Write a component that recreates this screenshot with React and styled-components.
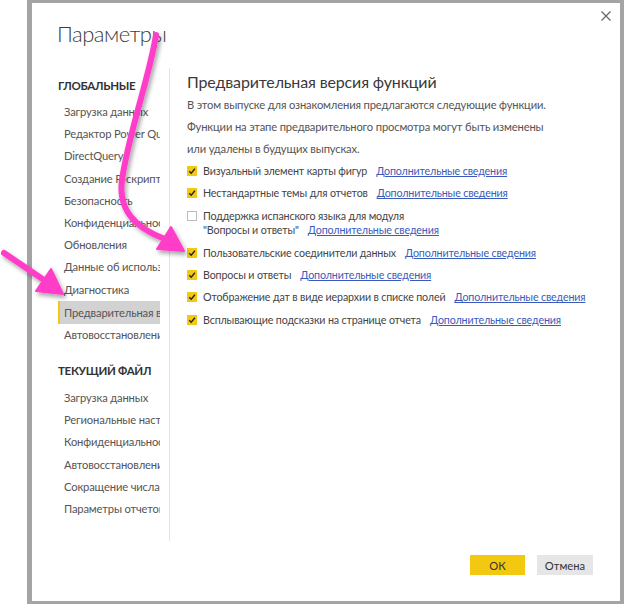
import React from "react";
import styled, { createGlobalStyle } from "styled-components";

const GlobalStyle = createGlobalStyle`
  html, body {
    margin: 0;
    background: #fff;
    font-family: Lato, "Open Sans", sans-serif;
  }
`;

const Page = styled.div`
  position: relative;
  width: 624px;
  height: 605px;
  padding-left: 27px;
  box-sizing: border-box;
  overflow: hidden;
`;

const Frame = styled.div`
  width: 597px;
  height: 604px;
  box-sizing: border-box;
  border: 4px solid #a4a4a4;
  border-top-width: 3px;
  border-bottom-width: 3px;
  border-left-width: 5px;
  background: #fff;
  display: flex;
  flex-direction: column;
  padding: 8px 9px 0 26px;
`;

const Header = styled.div`
  height: 57px;
  display: flex;
  justify-content: space-between;
  align-items: flex-start;
`;

const DialogTitle = styled.h1`
  margin: 8px 0 0 -1px;
  font-size: 22px;
  line-height: 30px;
  font-weight: 300;
  letter-spacing: -0.5px;
  color: #3c3c3c;
`;

const CloseButton = styled.button`
  width: 10px;
  height: 10px;
  padding: 0;
  border: none;
  background: none;
  display: flex;
`;

const Main = styled.div`
  height: 473px;
  display: flex;
`;

const Nav = styled.nav`
  width: 102px;
  padding-top: 8px;
  margin-right: 9px;
  overflow: hidden;
  white-space: nowrap;
`;

const Divider = styled.div`
  width: 1px;
  background: #e4e4e4;
`;

const SectionTitle = styled.div`
  font-size: 11.5px;
  line-height: 20px;
  font-weight: 700;
  letter-spacing: -0.3px;
  color: #333;
  margin-top: ${(p) => p.$top || 0}px;
  margin-bottom: ${(p) => p.$bottom || 0}px;
`;

const NavItem = styled.div`
  font-size: 11.2px;
  letter-spacing: -0.15px;
  line-height: ${(p) => (p.$active ? "23px" : "22.2px")};
  color: #555;
  padding-left: ${(p) => (p.$active ? "4px" : "6px")};
  background: ${(p) => (p.$active ? "#d2d2d2" : "transparent")};
  border-left: ${(p) => (p.$active ? "2px solid #f2c811" : "none")};
  overflow: hidden;
`;

const Content = styled.section`
  flex: 1;
  padding: 2px 0 0 17px;
`;

const ContentTitle = styled.h2`
  margin: 0;
  font-size: 16px;
  line-height: 24px;
  font-weight: 400;
  letter-spacing: -0.15px;
  color: #3a3a3a;
`;

const Paragraph = styled.p`
  margin: 0;
  font-size: 11.2px;
  letter-spacing: -0.15px;
  line-height: 22px;
  color: #555;
`;

const Row = styled.div`
  display: flex;
  align-items: flex-start;
  padding: 4px 0;
  font-size: 10.7px;
  letter-spacing: -0.15px;
  line-height: 14.4px;
  color: #444;
`;

const Box = styled.span`
  flex: none;
  width: 10px;
  height: 10px;
  margin-top: 2px;
  box-sizing: border-box;
  display: flex;
  align-items: center;
  justify-content: center;
  background: ${(p) => (p.$checked ? "#f2c811" : "#fff")};
  border: ${(p) => (p.$checked ? "none" : "1px solid #bdbdbd")};
`;

const Label = styled.span`
  margin-left: 6px;
`;

const MoreLink = styled.a`
  margin-left: 9px;
  color: #3a5bbb;
  text-decoration: underline;
  cursor: pointer;
`;

const Footer = styled.div`
  display: flex;
  justify-content: flex-end;
  gap: 12px;
  margin-top: 14px;
  padding-right: 18px;
`;

const Button = styled.button`
  width: ${(p) => (p.$primary ? "55px" : "56px")};
  height: 20px;
  border: none;
  padding: 0;
  font-family: inherit;
  font-size: 11.2px;
  color: #333;
  background: ${(p) => (p.$primary ? "#f2c811" : "#e6e6e6")};
`;

const Overlay = styled.svg`
  position: absolute;
  left: 0;
  top: 0;
  pointer-events: none;
`;

const globalItems = [
  "Загрузка данных",
  " Редактор Power Query",
  "DirectQuery",
  "Создание R-скриптов",
  "Безопасность",
  "Конфиденциальность",
  "Обновления",
  "Данные об использовании",
  "Диагностика",
  "Предварительная версия функций",
  "Автовосстановление",
];

const fileItems = [
  "Загрузка данных",
  "Региональные настройки",
  "Конфиденциальность",
  "Автовосстановление",
  "Сокращение числа запросов",
  "Параметры отчетов",
];

const features = [
  { checked: true, text: "Визуальный элемент карты фигур" },
  { checked: true, text: "Нестандартные темы для отчетов" },
  {
    checked: false,
    text: "Поддержка испанского языка для модуля",
    second: "\"Вопросы и ответы\"",
  },
  { checked: true, text: "Пользовательские соединители данных" },
  { checked: true, text: "Вопросы и ответы" },
  { checked: true, text: "Отображение дат в виде иерархии в списке полей" },
  { checked: true, text: "Всплывающие подсказки на странице отчета" },
];

const Check = () => (
  <svg width="8" height="8" viewBox="0 0 8 8">
    <path d="M1.2 4.2 L3.2 6.2 L6.9 1.8" fill="none" stroke="#222" strokeWidth="1.4" />
  </svg>
);

const Arrows = () => (
  <Overlay width="624" height="605">
    <defs>
      <filter id="shadow" x="-20%" y="-20%" width="140%" height="140%">
        <feDropShadow dx="2" dy="3" stdDeviation="2" floodColor="#000" floodOpacity="0.35" />
      </filter>
    </defs>
    <g filter="url(#shadow)" fill="#ff3dc9" stroke="#ff3dc9" strokeLinecap="round" strokeLinejoin="round">
      <path d="M156 35 C150 75 128 135 122 180 C118 210 135 228 165 239" fill="none" strokeWidth="6" />
      <polygon points="184,251 157,249 171,227" strokeWidth="2" />
      <path d="M4 253 L44 280" fill="none" strokeWidth="6" />
      <polygon points="63,294 36,291 51,269" strokeWidth="2" />
    </g>
  </Overlay>
);

const App = () => (
  <>
    <GlobalStyle />
    <Page>
      <Frame>
        <Header>
          <DialogTitle>Параметры</DialogTitle>
          <CloseButton aria-label="Закрыть">
            <svg width="10" height="10" viewBox="0 0 10 10">
              <path d="M0.5 0.5 L9.5 9.5 M9.5 0.5 L0.5 9.5" stroke="#666" strokeWidth="1.2" />
            </svg>
          </CloseButton>
        </Header>
        <Main>
          <Nav>
            <SectionTitle $bottom={5}>ГЛОБАЛЬНЫЕ</SectionTitle>
            {globalItems.map((item) => (
              <NavItem key={item} $active={item.startsWith("Предварительная")}>
                {item}
              </NavItem>
            ))}
            <SectionTitle $top={15} $bottom={6}>
              ТЕКУЩИЙ ФАЙЛ
            </SectionTitle>
            {fileItems.map((item) => (
              <NavItem key={item}>{item}</NavItem>
            ))}
          </Nav>
          <Divider />
          <Content>
            <ContentTitle>Предварительная версия функций</ContentTitle>
            <Paragraph>
              В этом выпуске для ознакомления предлагаются следующие функции.
              <br />
              Функции на этапе предварительного просмотра могут быть изменены
              <br />
              или удалены в будущих выпусках.
            </Paragraph>
            {features.map((f) => (
              <Row key={f.text}>
                <Box $checked={f.checked}>{f.checked && <Check />}</Box>
                <Label>
                  {f.text}
                  {f.second && (
                    <>
                      <br />
                      {f.second}
                    </>
                  )}
                  <MoreLink>Дополнительные сведения</MoreLink>
                </Label>
              </Row>
            ))}
          </Content>
        </Main>
        <Footer>
          <Button $primary>ОК</Button>
          <Button>Отмена</Button>
        </Footer>
      </Frame>
      <Arrows />
    </Page>
  </>
);

export default App;
